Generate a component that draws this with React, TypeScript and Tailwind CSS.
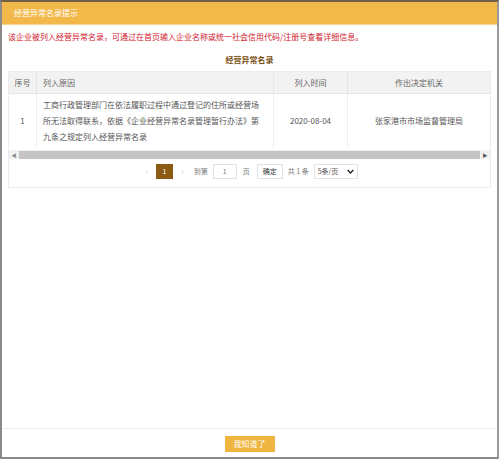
import React from "react";

export default function App() {
  const f = { fontFamily: '"Noto Sans CJK SC", "Noto Sans", sans-serif' };
  return (
    <div
      style={f}
      className="w-[499px] h-[459px] flex flex-col bg-white border-t-2 border-t-[#6f6148] border-l-2 border-l-[#8a8a8a] border-r-2 border-r-[#9a9a9a] border-b-2 border-b-[#8a8a8a] overflow-hidden"
    >
      <div className="h-[23px] shrink-0 bg-[#f3b84a] border-b border-b-[#f7d58f] flex items-center pl-[12px] text-[8px] text-white">
        经营异常名录提示
      </div>
      <div className="flex-1 flex flex-col px-[6px]">
        <div className="mt-[6px] text-[8px] leading-[12px] text-[#d0182f]">
          该企业被列入经营异常名录，可通过在首页输入企业名称或统一社会信用代码/注册号查看详细信息。
        </div>
        <div className="mt-[11px] text-center text-[8px] leading-[12px] font-bold text-[#7a4f12]">
          经营异常名录
        </div>
        <div className="mt-[5px] border border-[#ececec] h-[117px] flex flex-col">
          <div className="flex h-[22px] bg-[#f2f2f2] border-b border-[#e6e6e6] text-[8px] text-[#666]">
            <div className="w-[28px] flex items-center justify-center border-r border-[#e6e6e6]">序号</div>
            <div className="w-[237px] flex items-center pl-[6px] border-r border-[#e6e6e6]">列入原因</div>
            <div className="w-[74px] flex items-center justify-center border-r border-[#e6e6e6]">列入时间</div>
            <div className="flex-1 flex items-center justify-center">作出决定机关</div>
          </div>
          <div className="flex h-[54px] text-[8px] text-[#555]">
            <div className="w-[28px] flex items-center justify-center border-r border-[#eeeeee]">1</div>
            <div className="w-[237px] flex items-center pl-[6px] pr-[12px] leading-[16px] border-r border-[#eeeeee]">
              工商行政管理部门在依法履职过程中通过登记的住所或经营场所无法取得联系，依据《企业经营异常名录管理暂行办法》第九条之规定列入经营异常名录
            </div>
            <div className="w-[74px] flex items-center justify-center border-r border-[#eeeeee]">2020-08-04</div>
            <div className="flex-1 flex items-center justify-center">张家港市市场监督管理局</div>
          </div>
          <div className="mt-[2px] h-[9px] flex items-center bg-[#f1f1f1]">
            <div className="w-[10px] flex items-center justify-center text-[5px] text-[#888]">◀</div>
            <div className="flex-1 h-[8px] bg-[#c4c4c4]" />
            <div className="w-[10px] flex items-center justify-center text-[5px] text-[#555]">▶</div>
          </div>
          <div className="mt-[5px] flex items-center justify-center text-[7px] text-[#777] gap-[0px] pl-[4px]">
            <span className="text-[#ccc] text-[9px] mr-[8px]">‹</span>
            <span className="w-[17px] h-[15px] bg-[#8b5b14] text-white flex items-center justify-center">1</span>
            <span className="text-[#ccc] text-[9px] ml-[8px] mr-[10px]">›</span>
            <span className="mr-[5px]">到第</span>
            <span className="w-[24px] h-[15px] border border-[#e2e2e2] flex items-center justify-center mr-[6px]">1</span>
            <span className="mr-[7px]">页</span>
            <span className="h-[15px] px-[5px] border border-[#e2e2e2] flex items-center text-[#333] mr-[5px]">确定</span>
            <span className="mr-[5px]">共 1 条</span>
            <span className="h-[15px] w-[44px] border border-[#e2e2e2] flex items-center justify-between px-[3px] text-[#555]">
              <span>5条/页</span>
              <svg width="7" height="5" viewBox="0 0 10 6"><path d="M1 1l4 4 4-4" fill="none" stroke="#222" strokeWidth="2" /></svg>
            </span>
          </div>
        </div>
        <div className="flex-1" />
      </div>
      <div className="h-[29px] shrink-0 border-t border-[#eeeeee] flex items-start justify-center pt-[7px]">
        <div className="w-[50px] h-[16px] bg-[#f0b440] text-white text-[8px] flex items-center justify-center">我知道了</div>
      </div>
    </div>
  );
}
